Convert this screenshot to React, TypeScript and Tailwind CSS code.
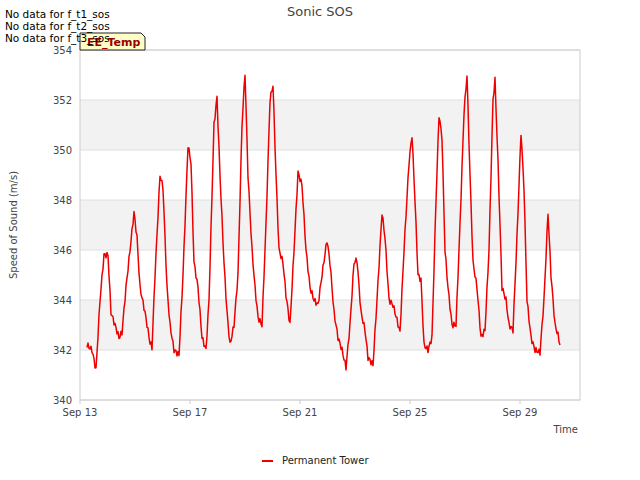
const pts: [number, number][] = [
  [87,342.2],[92,342],[96,341.2],[100,344],[104,345.8],[108,345.8],[111,343.5],[115,343],[119,342.5],[122,342.7],[126,344.5],[130,346],[134,347.5],[137,346.5],[140,344.5],[145,343.5],[150,342.3],[152,342.1],[155,345],[160,349],[163,348.5],[167,344.5],[170,343],[174,342],[179,341.8],[183,345],[188,350.2],[191,349.5],[194,345.5],[198,344.5],[202,342.5],[206,342],[209,344],[214,351],[217,352.1],[220,349],[224,345.5],[227,343.5],[230,342.2],[234,343],[238,345],[242,351],[245,353.1],[248,349],[252,346],[255,344.5],[258,343.3],[262,343],[266,347],[270,352],[273,352.6],[276,349],[279,346],[283,345.5],[286,344.2],[290,343],[294,346],[298,349.1],[302,348.6],[306,346],[310,344.5],[314,344],[318,343.8],[322,345],[327,346.4],[330,345.5],[334,343.5],[338,342.5],[342,342],[346,341.3],[350,343],[354,345.5],[357,345.6],[361,343.5],[365,342.8],[368,341.7],[373,341.4],[377,344],[382,347.5],[385,346.5],[389,344],[393,343.8],[397,343.2],[400,342.7],[404,346],[409,349.5],[412,350.6],[415,348],[418,345],[421,344.8],[424,342.2],[428,342],[432,342.5],[436,348],[439,351.4],[442,350.5],[445,346],[448,344.5],[452,343],[456,343],[460,347],[464,351.5],[467,353],[470,349],[473,345.5],[477,344.5],[481,342.5],[485,342.8],[489,346],[493,352],[495,352.8],[498,349.5],[502,344.5],[506,344],[509,343],[513,342.8],[517,346.5],[521,350.7],[524,348.5],[527,344],[531,342.5],[535,342],[540,341.9],[544,344],[548,347.5],[551,345],[555,343],[558,342.6],[560,342.2],
]

const yPix = (v: number) => 400 - (v - 340) * 25

// interpolate every px and add a little deterministic jitter
function buildPath() {
  const out: string[] = []
  for (let i = 0; i < pts.length - 1; i++) {
    const [x0, v0] = pts[i]
    const [x1, v1] = pts[i + 1]
    for (let x = x0; x < x1; x++) {
      const t = (x - x0) / (x1 - x0)
      const v = v0 + (v1 - v0) * t + Math.sin(x * 2.3) * 0.12
      out.push(`${out.length ? 'L' : 'M'}${x},${yPix(v).toFixed(1)}`)
    }
  }
  const [lx, lv] = pts[pts.length - 1]
  out.push(`L${lx},${yPix(lv).toFixed(1)}`)
  return out.join(' ')
}

export default function App() {
  const d = buildPath()
  const ticks = [340, 342, 344, 346, 348, 350, 352, 354]
  const xTicks: [number, string][] = [[80, 'Sep 13'], [190, 'Sep 17'], [300, 'Sep 21'], [410, 'Sep 25'], [520, 'Sep 29']]
  return (
    <div className="relative h-[480px] w-[640px] bg-white" style={{ fontFamily: '"DejaVu Sans", sans-serif' }}>
      <svg width="640" height="480" className="absolute left-0 top-0" fontFamily="DejaVu Sans, sans-serif">
        <text x="320" y="16" textAnchor="middle" fontSize="13" fill="#444">Sonic SOS</text>
        {[342, 346, 350].map((v) => (
          <rect key={v} x="80" y={yPix(v + 2)} width="500" height="50" fill="#f2f2f2" />
        ))}
        {ticks.map((v) => (
          <g key={v}>
            <line x1="80" x2="580" y1={yPix(v)} y2={yPix(v)} stroke="#e0e0e0" strokeWidth="1" />
            <text x="72" y={yPix(v) + 4} textAnchor="end" fontSize="10" fill="#444">{v}</text>
          </g>
        ))}
        {xTicks.map(([x, l]) => (
          <g key={l}>
            <line x1={x} x2={x} y1="400" y2="404" stroke="#ccc" />
            <text x={x} y="416" textAnchor="middle" fontSize="10" fill="#444">{l}</text>
          </g>
        ))}
        <rect x="80" y="50" width="500" height="350" fill="none" stroke="#ccc" />
        <path d={d} fill="none" stroke="#ee0000" strokeWidth="1.5" strokeLinejoin="round" />
        <text x="578" y="433" textAnchor="end" fontSize="10" fill="#444">Time</text>
        <text transform="translate(17,225) rotate(-90)" textAnchor="middle" fontSize="10" fill="#444">Speed of Sound (m/s)</text>
        <line x1="262" x2="273" y1="461" y2="461" stroke="#ee0000" strokeWidth="2" />
        <text x="282" y="464" fontSize="10" fill="#222">Permanent Tower</text>
        <path d="M80,50 L80,33 L141,33 L145,37 L145,50 Z" fill="#ffffc8" stroke="#222" />
        <text x="87" y="46" fontSize="11" fontWeight="bold" fill="#990000">EE_Temp</text>
      </svg>
      <div className="absolute left-[5px] top-[8px] text-[10.5px] leading-[12px] text-black">
        <div>No data for f_t1_sos</div>
        <div>No data for f_t2_sos</div>
        <div>No data for f_t3_sos</div>
      </div>
    </div>
  )
}
